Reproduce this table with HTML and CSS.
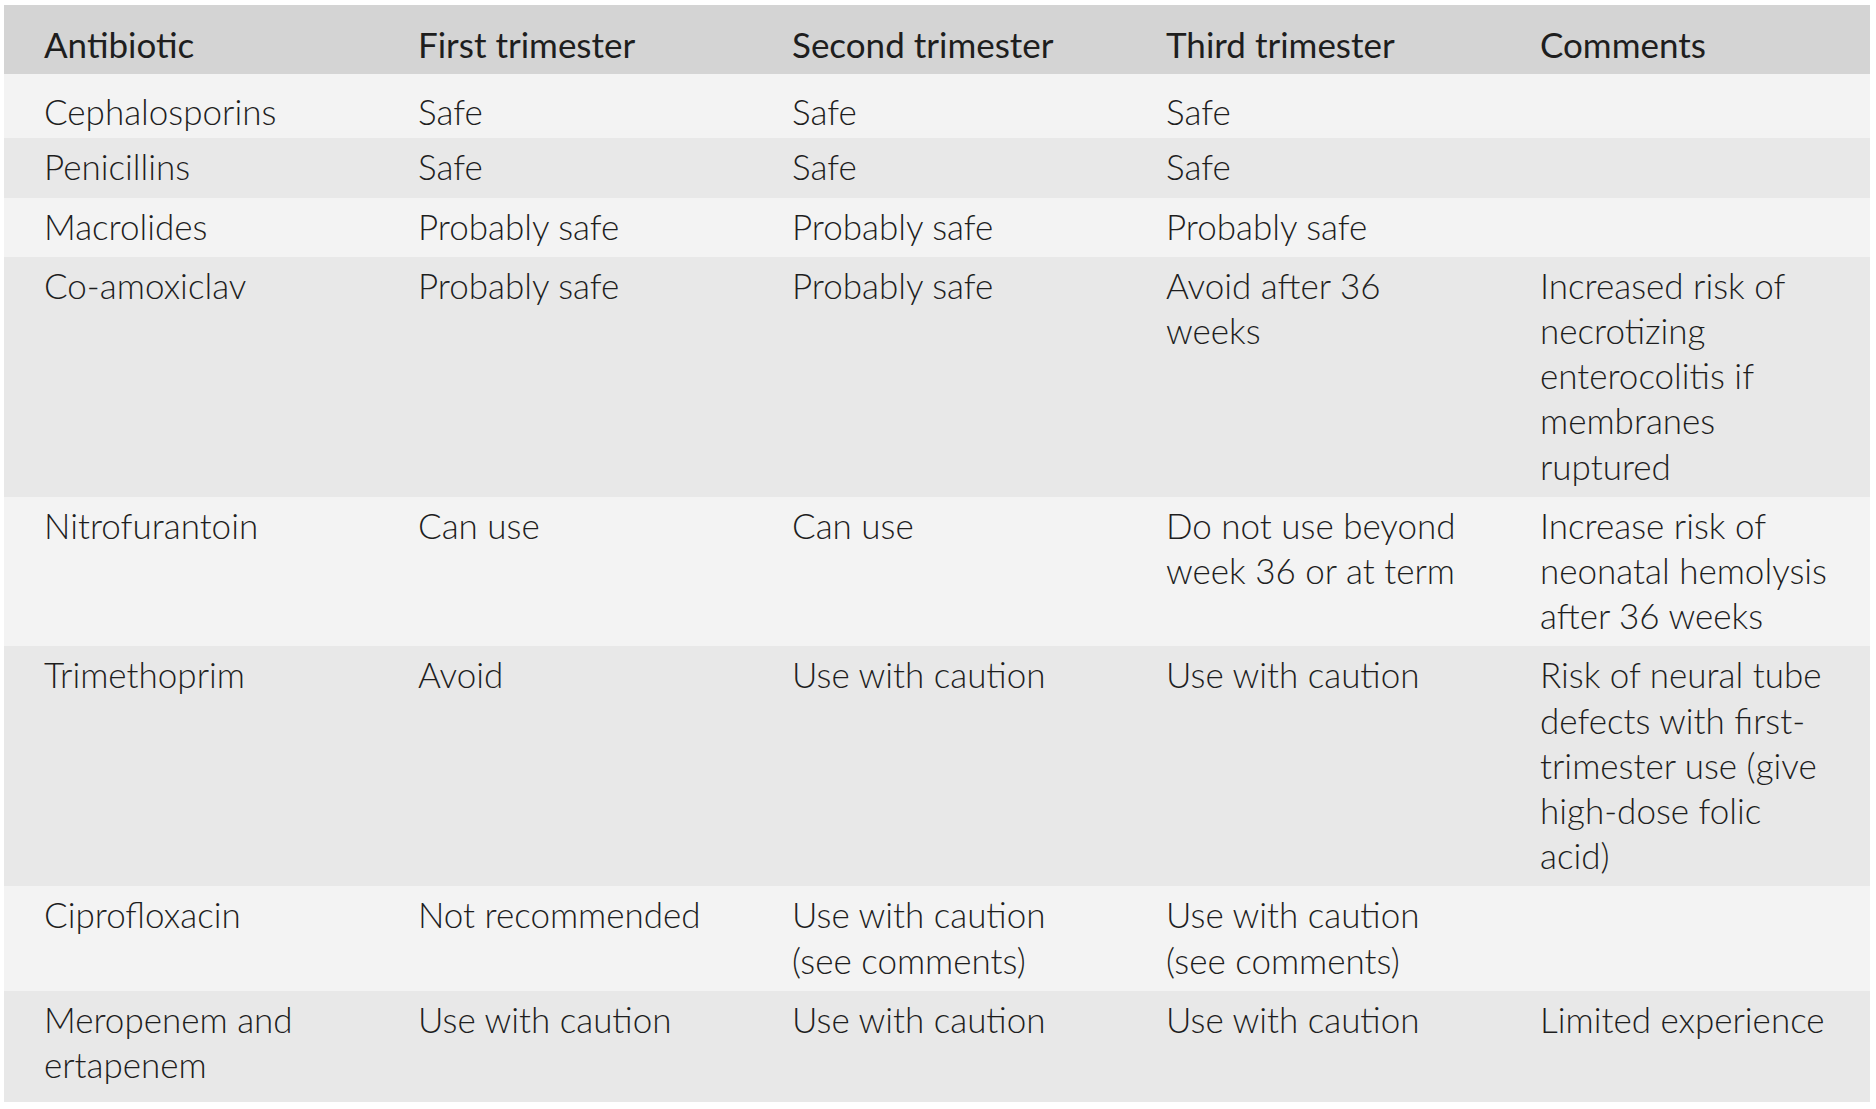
FILE: index.html
```html
<!DOCTYPE html>
<html lang="en">
<head>
<meta charset="utf-8">
<title>Antibiotics in pregnancy</title>
<link rel="stylesheet" href="styles.css">
</head>
<body>
<table class="abx">
  <colgroup>
    <col class="c1"><col class="c2"><col class="c3"><col class="c4"><col class="c5">
  </colgroup>
  <thead>
    <tr class="head">
      <th>Antibiotic</th>
      <th>First trimester</th>
      <th>Second trimester</th>
      <th>Third trimester</th>
      <th>Comments</th>
    </tr>
  </thead>
  <tbody>
    <tr class="light first">
      <td>Cephalosporins</td><td>Safe</td><td>Safe</td><td>Safe</td><td></td>
    </tr>
    <tr class="dark">
      <td>Penicillins</td><td>Safe</td><td>Safe</td><td>Safe</td><td></td>
    </tr>
    <tr class="light">
      <td>Macrolides</td><td>Probably safe</td><td>Probably safe</td><td>Probably safe</td><td></td>
    </tr>
    <tr class="dark">
      <td>Co-amoxiclav</td><td>Probably safe</td><td>Probably safe</td>
      <td>Avoid after 36<br>weeks</td>
      <td>Increased risk of<br>necrotizing<br>enterocolitis if<br>membranes<br>ruptured</td>
    </tr>
    <tr class="light">
      <td>Nitrofurantoin</td><td>Can use</td><td>Can use</td>
      <td>Do not use beyond<br>week 36 or at term</td>
      <td>Increase risk of<br>neonatal hemolysis<br>after 36 weeks</td>
    </tr>
    <tr class="dark">
      <td>Trimethoprim</td><td>Avoid</td><td>Use with caution</td><td>Use with caution</td>
      <td>Risk of neural tube<br>defects with first-<br>trimester use (give<br>high-dose folic<br>acid)</td>
    </tr>
    <tr class="light">
      <td>Ciprofloxacin</td><td>Not recommended</td>
      <td>Use with caution<br>(see comments)</td>
      <td>Use with caution<br>(see comments)</td><td></td>
    </tr>
    <tr class="dark last">
      <td>Meropenem and<br>ertapenem</td><td>Use with caution</td><td>Use with caution</td><td>Use with caution</td>
      <td>Limited experience</td>
    </tr>
  </tbody>
</table>
</body>
</html>
```
FILE: styles.css
```css
html, body {
  margin: 0;
  padding: 0;
  background: #ffffff;
}

body {
  padding: 5px 0 0 4px;
  font-family: "Lato", "Open Sans", sans-serif;
  color: #1e1e1e;
}

.abx {
  border-collapse: collapse;
  border-spacing: 0;
  table-layout: fixed;
  width: 1866px;
  font-size: 35px;
  line-height: 45.2px;
}

.c1, .c2, .c3, .c4 { width: 374px; }
.c5 { width: 370px; }

.abx th,
.abx td {
  text-align: left;
  vertical-align: top;
  white-space: nowrap;
  padding: 6px 20px 8px 40px;
  font-weight: 300;
}

.head th {
  background: #d4d4d4;
  font-weight: 400;
  padding-top: 17px;
  padding-bottom: 7px;
}

.light td { background: #f3f3f3; }
.dark td { background: #e8e8e8; }

.first td {
  padding-top: 15px;
  padding-bottom: 4px;
}

.last td {
  padding-bottom: 15px;
}
```
